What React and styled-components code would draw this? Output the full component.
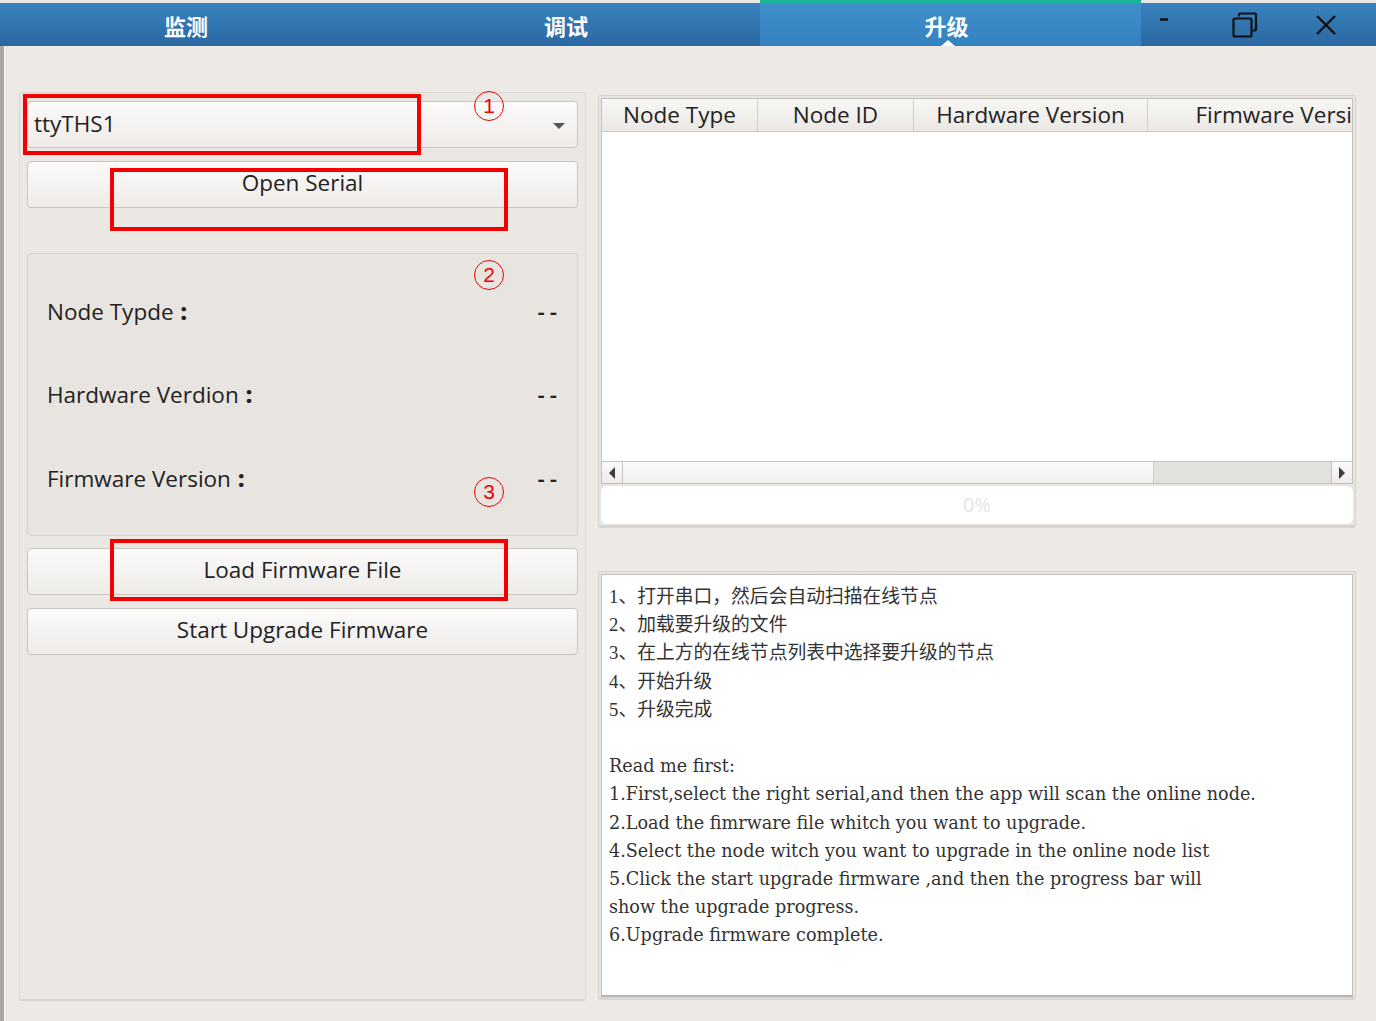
import React from 'react'
import styled, { createGlobalStyle } from 'styled-components'

const GlobalStyle = createGlobalStyle`
  html, body {
    margin: 0;
    padding: 0;
    background: #edeae6;
    overflow: hidden;
  }
  * { box-sizing: border-box; }
`

const uiFont = `"Open Sans", "Noto Sans", "Noto Sans CJK SC", sans-serif`

const Window = styled.div`
  display: flex;
  width: 1376px;
  height: 1021px;
  background: #edeae6;
  font-family: ${uiFont};
`

const LeftEdge = styled.div`
  width: 7px;
  flex: none;
  background: linear-gradient(to right, #a9a6a1 0, #a9a6a1 4px, #f3f1ee 4px, #f3f1ee 6px, #e4e1dd 6px);
`

const Main = styled.div`
  flex: 1;
  display: flex;
  flex-direction: column;
`

const TabBar = styled.div`
  height: 46px;
  margin-left: -7px;
  border-top: 3px solid #e9e7e4;
  display: grid;
  grid-template-columns: 380px 380px 381px 1fr;
  background: linear-gradient(#3a82c0, #2a68a0);
`

const Tab = styled.div`
  position: relative;
  display: flex;
  align-items: center;
  justify-content: center;
  color: #fff;
  font-family: "Noto Sans CJK SC", sans-serif;
  font-weight: 700;
  font-size: 22px;
  padding-right: 8px;
  ${p => p.$active && `
    background: linear-gradient(#4190cc, #3382bf);
    border-top: 3px solid #19b69a;
    margin-top: -3px;
    &::after {
      content: '';
      position: absolute;
      left: 181px;
      bottom: 0;
      border-left: 7px solid transparent;
      border-right: 7px solid transparent;
      border-bottom: 6px solid #fff;
    }
  `}
`

const Controls = styled.div`
  display: flex;
  align-items: center;
  padding-left: 3px;
  gap: 41px;
`

const CtrlBtn = styled.div`
  width: 40px;
  height: 40px;
  display: flex;
  align-items: center;
  justify-content: center;
`

const Content = styled.div`
  flex: 1;
  display: grid;
  grid-template-columns: 567px 758px;
  gap: 12px;
  padding: 46px 0 20px 12px;
`

const LeftPanel = styled.div`
  position: relative;
  display: flex;
  flex-direction: column;
  padding: 8px 7px;
  border: 1px solid #dcd8d3;
  border-bottom: 2px solid #d8d4cf;
  border-radius: 3px;
  background: #ebe8e4;
`

const Raised = styled.div`
  height: 47px;
  flex: none;
  display: flex;
  align-items: center;
  border: 1px solid #c8c4bf;
  border-radius: 4px;
  background: linear-gradient(#fcfbfa, #eeebe8);
  color: #222;
  font-size: 22.5px;
  font-weight: 500;
  margin-top: ${p => p.$mt || 0}px;
`

const Combo = styled(Raised)`
  justify-content: space-between;
  padding: 0 12px 2px 6px;
`

const Button = styled(Raised)`
  justify-content: center;
  padding-bottom: 4px;
`

const Arrow = styled.span`
  width: 0;
  height: 0;
  border-left: 6px solid transparent;
  border-right: 6px solid transparent;
  border-top: 6px solid #555;
  margin-top: 4px;
`

const InfoGroup = styled.div`
  height: 283px;
  margin-top: 45px;
  margin-bottom: 12px;
  border: 1px solid #d6d2cd;
  border-radius: 3px;
  background: #e8e5e1;
  display: flex;
  flex-direction: column;
  justify-content: space-between;
  padding: 42px 20px 42px 19px;
`

const InfoRow = styled.div`
  display: flex;
  justify-content: space-between;
  align-items: center;
  height: 30px;
  color: #222;
  font-size: 22.5px;
  font-weight: 500;
`

const Colon = styled.span`
  margin-left: 7px;
  font-weight: 800;
`

const Dash = styled.span`
  letter-spacing: 5px;
  margin-right: -5px;
  font-weight: 600;
`

const Mark = styled.div`
  position: absolute;
  left: ${p => p.$x}px;
  top: ${p => p.$y}px;
  width: ${p => p.$w}px;
  height: ${p => p.$h}px;
  border: 4px solid #f50000;
  pointer-events: none;
`

const Circled = styled.div`
  position: absolute;
  left: ${p => p.$x - 15}px;
  top: ${p => p.$y - 15}px;
  width: 30px;
  height: 30px;
  border: 1.5px solid #f00000;
  border-radius: 50%;
  color: #f00000;
  font-family: "Liberation Sans", sans-serif;
  font-size: 21px;
  line-height: 27px;
  text-align: center;
`

const RightCol = styled.div`
  display: flex;
  flex-direction: column;
  gap: 43px;
  margin-top: 3px;
`

const Frame = styled.div`
  border: 1px solid #d6d2cd;
  border-bottom: 3px solid #d8d4cf;
  border-radius: 3px;
  padding: 2px 2px 0 2px;
  background: #e9e6e2;
`

const TableFrame = styled(Frame)`
  height: 433px;
  display: flex;
  flex-direction: column;
`

const Table = styled.div`
  border: 1px solid #c3bfba;
  background: #fff;
  flex: 1;
  display: flex;
  flex-direction: column;
`

const Header = styled.div`
  display: grid;
  grid-template-columns: 156px 156px 234px 1fr;
  height: 33px;
  border-bottom: 1px solid #cfcbc6;
  background: linear-gradient(#f8f7f5, #ebe8e4);
`

const HeadCell = styled.div`
  border-right: 1px solid #d2cec9;
  display: flex;
  align-items: center;
  justify-content: ${p => p.$left ? 'flex-end' : 'center'};
  font-size: 22.5px;
  font-weight: 500;
  color: #222;
  white-space: nowrap;
  overflow: hidden;
  padding-bottom: 1px;
  &:last-child { border-right: none; }
`

const TableBody = styled.div`
  flex: 1;
`

const HScroll = styled.div`
  height: 22px;
  display: flex;
  border-top: 1px solid #c8c4bf;
  background: #e3e1dd;
`

const ScrollBtn = styled.div`
  width: 21px;
  display: flex;
  align-items: center;
  justify-content: center;
  background: linear-gradient(#fbfaf9, #efece9);
  border-${p => p.$side}: 1px solid #c8c4bf;
`

const Tri = styled.span`
  width: 0;
  height: 0;
  border-top: 6px solid transparent;
  border-bottom: 6px solid transparent;
  ${p => p.$dir === 'left' ? 'border-right: 6px solid #3c3c3c;' : 'border-left: 6px solid #3c3c3c;'}
`

const Thumb = styled.div`
  width: 531px;
  background: linear-gradient(#fcfbfa, #f1efec);
  border-right: 1px solid #cfcbc6;
`

const Track = styled.div`
  flex: 1;
`

const Progress = styled.div`
  height: 38px;
  margin: 2px 0 1px 0;
  background: #fff;
  border-radius: 6px;
  display: flex;
  align-items: center;
  justify-content: center;
  color: #e3e3e6;
  font-size: 20px;
  padding-bottom: 2px;
`

const TextFrame = styled(Frame)`
  height: 429px;
  display: flex;
`

const TextBox = styled.div`
  flex: 1;
  background: #fff;
  border: 1px solid #c3bfba;
  border-bottom: 2px solid #b7b3ae;
  padding: 8px 0 0 7px;
  font-family: "DejaVu Serif", "Noto Sans CJK SC", serif;
  line-height: 28.2px;
  color: #333;
`

const Line = styled.div`
  min-height: 28.2px;
  white-space: nowrap;
  font-size: ${p => p.$latin ? '17.6px' : '18.8px'};
  ${p => !p.$latin && 'font-family: "Liberation Serif", "Noto Sans CJK SC", serif;'}
`

const cnNotes = [
  '1、打开串口，然后会自动扫描在线节点',
  '2、加载要升级的文件',
  '3、在上方的在线节点列表中选择要升级的节点',
  '4、开始升级',
  '5、升级完成',
]

const enNotes = [
  'Read me first:',
  '1.First,select the right serial,and then the app will scan the online node.',
  '2.Load the fimrware file whitch you want to upgrade.',
  '4.Select the node witch you want to upgrade in the online node list',
  '5.Click the start upgrade firmware ,and then the progress bar will',
  'show the upgrade progress.',
  '6.Upgrade firmware complete.',
]

export default function App() {
  return (
    <>
      <GlobalStyle />
      <Window>
        <LeftEdge />
        <Main>
          <TabBar>
            <Tab>监测</Tab>
            <Tab>调试</Tab>
            <Tab $active>升级</Tab>
            <Controls>
              <CtrlBtn>
                <svg width="24" height="24" viewBox="0 0 24 24">
                  <path d="M8 0.5h8" stroke="#111" strokeWidth="2.5" transform="translate(0,6)" />
                </svg>
              </CtrlBtn>
              <CtrlBtn>
                <svg width="30" height="30" viewBox="0 0 30 30">
                  <path d="M9 6.5V4.5a1 1 0 0 1 1-1h15a1 1 0 0 1 1 1v15a1 1 0 0 1-1 1h-2" fill="none" stroke="#111" strokeWidth="2.2" />
                  <rect x="3.5" y="8.5" width="18" height="18" rx="1.5" fill="none" stroke="#111" strokeWidth="2.2" />
                </svg>
              </CtrlBtn>
              <CtrlBtn>
                <svg width="26" height="26" viewBox="0 0 26 26">
                  <path d="M4 4L22 22M22 4L4 22" stroke="#111" strokeWidth="2.4" />
                </svg>
              </CtrlBtn>
            </Controls>
          </TabBar>
          <Content>
            <LeftPanel>
              <Combo>
                <span>ttyTHS1</span>
                <Arrow />
              </Combo>
              <Button $mt={13}>Open Serial</Button>
              <InfoGroup>
                <InfoRow><span>Node Typde<Colon>:</Colon></span><Dash>--</Dash></InfoRow>
                <InfoRow><span>Hardware Verdion<Colon>:</Colon></span><Dash>--</Dash></InfoRow>
                <InfoRow><span>Firmware Version<Colon>:</Colon></span><Dash>--</Dash></InfoRow>
              </InfoGroup>
              <Button>Load Firmware File</Button>
              <Button $mt={13}>Start Upgrade Firmware</Button>

              <Mark $x={3} $y={1} $w={398} $h={61} />
              <Mark $x={90} $y={75} $w={398} $h={63} />
              <Mark $x={90} $y={446} $w={398} $h={62} />
              <Circled $x={469} $y={13}>1</Circled>
              <Circled $x={469} $y={182}>2</Circled>
              <Circled $x={469} $y={399}>3</Circled>
            </LeftPanel>

            <RightCol>
              <TableFrame>
                <Table>
                  <Header>
                    <HeadCell>Node Type</HeadCell>
                    <HeadCell>Node ID</HeadCell>
                    <HeadCell>Hardware Version</HeadCell>
                    <HeadCell $left>Firmware Versi</HeadCell>
                  </Header>
                  <TableBody />
                  <HScroll>
                    <ScrollBtn $side="right"><Tri $dir="left" /></ScrollBtn>
                    <Thumb />
                    <Track />
                    <ScrollBtn $side="left"><Tri $dir="right" /></ScrollBtn>
                  </HScroll>
                </Table>
                <Progress>0%</Progress>
              </TableFrame>
              <TextFrame>
                <TextBox>
                  {cnNotes.map((t, i) => <Line key={'c' + i}>{t}</Line>)}
                  <Line />
                  {enNotes.map((t, i) => <Line key={'e' + i} $latin>{t}</Line>)}
                </TextBox>
              </TextFrame>
            </RightCol>
          </Content>
        </Main>
      </Window>
    </>
  )
}
